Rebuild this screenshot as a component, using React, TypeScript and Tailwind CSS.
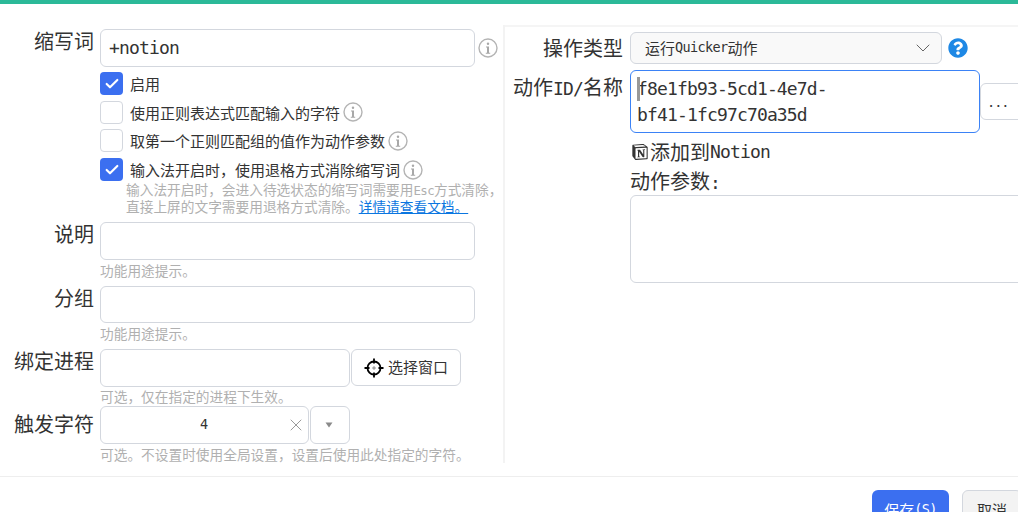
import { Check, ChevronDown, X } from "lucide-react";
import type { ReactNode } from "react";
import { FaQuestionCircle } from "react-icons/fa";
import { SiNotion } from "react-icons/si";

// Latin runs: half the CJK advance, like the 2:1 mono font in the screenshot.
function M({ children }: { children: ReactNode }) {
  return (
    <span className="font-['DejaVu_Sans_Mono',monospace] text-[0.9em] leading-none tracking-[-0.047em]">{children}</span>
  );
}

function InfoIcon() {
  return (
    <svg width="20" height="20" viewBox="0 0 20 20" className="shrink-0">
      <circle cx="10" cy="10" r="9" fill="none" stroke="#b4b4b4" strokeWidth="1.4" />
      <circle cx="10" cy="5.8" r="1.2" fill="#a8a8a8" />
      <path d="M8 8.5h3v6.2h1.2v1H7.8v-1H9V9.5H8z" fill="#a8a8a8" />
    </svg>
  );
}

function CrosshairIcon() {
  return (
    <svg width="20" height="20" viewBox="0 0 20 20" className="shrink-0">
      <circle cx="10" cy="10" r="6.5" fill="none" stroke="#000" strokeWidth="1.8" />
      <path d="M10 0.5v5M10 14.5v5M0.5 10h5M14.5 10h5" stroke="#000" strokeWidth="1.8" />
      <path d="M10 8.5v1M10 10.5v1M8.5 10h1M10.5 10h1" stroke="#000" strokeWidth="0.8" />
    </svg>
  );
}

function Label({ children }: { children: ReactNode }) {
  return <div className="h-[24px] w-[94px] shrink-0 text-right text-[20px] leading-[24px] text-[#333]">{children}</div>;
}

function Hint({ children }: { children: ReactNode }) {
  return <div className="ml-[100px] h-[18px] whitespace-nowrap text-[13.7px] leading-[18px] text-[#b0b0b0]">{children}</div>;
}

function CheckRow({ checked, info, children }: { checked?: boolean; info?: boolean; children: ReactNode }) {
  return (
    <div className="flex h-[23px] items-center">
      {checked ? (
        <div className="flex h-[23px] w-[23px] items-center justify-center rounded-[4px] bg-[#3b6ff0]">
          <Check size={16} strokeWidth={3.2} color="#fff" />
        </div>
      ) : (
        <div className="h-[23px] w-[23px] rounded-[4px] border border-[#d3d7de] bg-white" />
      )}
      <span className="ml-[7px] text-[15px] leading-[23px] text-[#333]">{children}</span>
      {info && (
        <span className="ml-[3px]">
          <InfoIcon />
        </span>
      )}
    </div>
  );
}

export default function App() {
  return (
    <div className="flex h-[512px] w-[1018px] flex-col overflow-hidden bg-white font-['Noto_Sans_CJK_SC',sans-serif]">
      <div className="h-1 shrink-0 bg-[#2bb998]" />

      <div className="flex h-[473px] shrink-0 flex-col border-b border-[#eeeeee]">
        <div className="mt-[21px] flex h-[438px] w-[1018px]">
          {/* left form */}
          <div className="w-[505px] shrink-0 border-r-2 border-[#f3f3f3] pt-1">
            <div className="flex">
              <Label>缩写词</Label>
              <div className="ml-[6px] flex h-[38px] w-[375px] items-center rounded-[6px] border border-[#d3d7de] px-[8px] text-[20px] text-[#333]">
                <M>+notion</M>
              </div>
              <span className="ml-[3px] mt-[9px]">
                <InfoIcon />
              </span>
            </div>

            <div className="ml-[100px] mt-[5px] flex w-[400px] flex-col gap-[5.7px]">
              <CheckRow checked>启用</CheckRow>
              <CheckRow info>使用正则表达式匹配输入的字符</CheckRow>
              <CheckRow info>取第一个正则匹配组的值作为动作参数</CheckRow>
              <CheckRow checked info>
                输入法开启时，使用退格方式消除缩写词
              </CheckRow>
            </div>

            <div className="ml-[126px] whitespace-nowrap text-[13.7px] leading-[17px] text-[#b0b0b0]">
              <div className="h-[17px]">
                输入法开启时，会进入待选状态的缩写词需要用<M>Esc</M>方式清除，
              </div>
              <div className="h-[17px]">
                直接上屏的文字需要用退格方式清除。<span className="text-[#0b76e0] underline">详情请查看文档。</span>
              </div>
            </div>

            <div className="mt-[7px] flex">
              <Label>说明</Label>
              <div className="ml-[6px] h-[38px] w-[375px] rounded-[6px] border border-[#d3d7de]" />
            </div>
            <Hint>
              <div className="mt-[1px]">功能用途提示。</div>
            </Hint>

            <div className="mt-[7px] flex">
              <Label>分组</Label>
              <div className="ml-[6px] h-[37px] w-[375px] rounded-[6px] border border-[#d3d7de]" />
            </div>
            <Hint>
              <div className="mt-[1px]">功能用途提示。</div>
            </Hint>

            <div className="mt-[7px] flex">
              <Label>绑定进程</Label>
              <div className="ml-[6px] h-[38px] w-[250px] rounded-[6px] border border-[#d3d7de]" />
              <div className="ml-[1px] flex h-[37px] w-[110px] items-center justify-center gap-[4px] rounded-[6px] border border-[#d3d7de] text-[15px] text-[#333]">
                <CrosshairIcon />
                选择窗口
              </div>
            </div>
            <Hint>
              <div>可选，仅在指定的进程下生效。</div>
            </Hint>

            <div className="mt-[1px] flex">
              <Label>
                <div className="pt-[6px]">触发字符</div>
              </Label>
              <div className="ml-[6px] flex h-[38px] w-[209px] items-center rounded-[6px] border border-[#d3d7de] pl-[99px] pr-[2px] text-[15px] text-[#333]">
                <M>4</M>
                <X size={20} strokeWidth={0.9} color="#777" className="ml-auto" />
              </div>
              <div className="ml-[1px] flex h-[38px] w-[40px] items-center justify-center rounded-[6px] border border-[#d3d7de] pr-[2px]">
                <svg width="8" height="6" viewBox="0 0 8 6">
                  <path d="M0.5 0.5h7L4 5.5z" fill="#8a8a8a" />
                </svg>
              </div>
            </div>
            <Hint>
              <div className="mt-[1px]">可选。不设置时使用全局设置，设置后使用此处指定的字符。</div>
            </Hint>
          </div>

          {/* right form */}
          <div className="min-w-0 flex-1 border-t-2 border-[#f5f5f5] pt-[5px]">
            <div className="flex items-center">
              <div className="w-[118px] shrink-0 text-right text-[20px] leading-[26px] text-[#333]">操作类型</div>
              <div className="ml-[7px] flex h-[32px] w-[312px] shrink-0 items-center rounded-[6px] border border-[#d3d7de] bg-[#f9f9f9] pl-[14px] pr-[6px] text-[15px] text-[#333]">
                运行<M>Quicker</M>动作
                <ChevronDown size={24} strokeWidth={0.9} color="#555" className="ml-auto" />
              </div>
              <FaQuestionCircle size={20} color="#1e88e5" className="ml-[6px]" />
            </div>

            <div className="mt-[6px] flex">
              <div className="w-[118px] shrink-0 pt-[4px] text-right text-[20px] leading-[26px] text-[#333]">
                动作<M>ID/</M>名称
              </div>
              <div className="relative ml-[7px] h-[63px] w-[350px] shrink-0 rounded-[6px] border border-[#3b82f6] px-[6px] py-[3px] text-[20px] leading-[26px] text-[#333]">
                <span className="absolute left-[6px] top-[6px] h-[24px] w-[3px] bg-[#999]" />
                <div className="h-[26px]">
                  <M>f8e1fb93-5cd1-4e7d-</M>
                </div>
                <div className="h-[26px]">
                  <M>bf41-1fc97c70a35d</M>
                </div>
              </div>
              <div className="mt-[13px] flex h-[37px] w-[50px] shrink-0 items-center rounded-[6px] border border-[#d3d7de] pl-[8px] text-[15px] text-[#333]">
                <span className="tracking-[3px]">...</span>
              </div>
            </div>

            <div className="ml-[125px] mt-[6px] flex h-[26px] items-center text-[20px] leading-[26px] text-[#333]">
              <SiNotion size={16} color="#333" className="ml-[2px] mr-[2px]" />
              添加到<M>Notion</M>
            </div>
            <div className="ml-[125px] mt-[3px] h-[26px] text-[20px] leading-[26px] text-[#333]">
              动作参数<M>:</M>
            </div>
            <div className="ml-[125px] mt-[1px] h-[88px] w-[420px] rounded-[6px] border border-[#d3d7de]" />
          </div>
        </div>
      </div>

      <div className="flex justify-end gap-[13px] pt-[13px]">
        <div className="flex h-[40px] w-[77px] shrink-0 items-center justify-center rounded-[6px] bg-[#3b6ff0] text-[15px] text-white">
          保存<M>(S)</M>
        </div>
        <div className="-mr-[4px] flex h-[40px] w-[60px] shrink-0 items-center justify-center rounded-[6px] border border-[#d3d7de] bg-[#f3f3f3] text-[15px] text-[#333]">
          取消
        </div>
      </div>
    </div>
  );
}
